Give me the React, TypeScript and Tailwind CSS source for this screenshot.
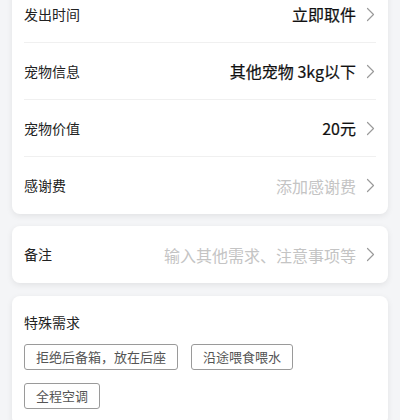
interface RowProps {
  label: string;
  value: string;
  placeholder?: boolean;
  divider?: boolean;
}

function Chevron() {
  return (
    <svg width="9" height="15" viewBox="0 0 9 15" fill="none" className="ml-[10px] mr-[1px]">
      <path d="M1.5 1.5L7.5 7.5L1.5 13.5" stroke="#9a9a9a" strokeWidth="1.2" strokeLinecap="round" strokeLinejoin="round" />
    </svg>
  );
}

function Row({ label, value, placeholder = false, divider = false }: RowProps) {
  return (
    <div className="px-3">
      <div className={`flex h-[57px] items-center justify-between ${divider ? 'border-b border-[#f0f0f0]' : ''}`}>
        <span className="text-[14px] text-[#222]">{label}</span>
        <div className="flex items-center">
          <span
            className={
              placeholder
                ? 'text-[16px] text-[#c4c4c4]'
                : 'text-[16px] text-[#111] [-webkit-text-stroke:0.2px_#111]'
            }
          >
            {value}
          </span>
          <Chevron />
        </div>
      </div>
    </div>
  );
}

const tags = ['拒绝后备箱，放在后座', '沿途喂食喂水', '全程空调'];

export default function App() {
  return (
    <div
      className="h-[420px] w-[400px] overflow-hidden bg-[#f4f5f7] px-3"
      style={{ fontFamily: '"Noto Sans CJK SC", "Noto Sans", sans-serif' }}
    >
      {/* Order details */}
      <div className="-mt-[14px] rounded-b-lg bg-white shadow-[0_2px_6px_rgba(0,0,0,0.08)]">
        <Row label="发出时间" value="立即取件" divider />
        <Row label="宠物信息" value="其他宠物 3kg以下" divider />
        <Row label="宠物价值" value="20元" divider />
        <Row label="感谢费" value="添加感谢费" placeholder />
      </div>

      {/* Remarks */}
      <div className="mt-3 rounded-lg bg-white shadow-[0_2px_6px_rgba(0,0,0,0.08)]">
        <Row label="备注" value="输入其他需求、注意事项等" placeholder />
      </div>

      {/* Special requests */}
      <div className="mt-[13px] rounded-lg bg-white px-3 pb-4 pt-4 shadow-[0_2px_6px_rgba(0,0,0,0.08)]">
        <div className="text-[14px] leading-5 text-[#222]">特殊需求</div>
        <div className="mt-3 flex flex-wrap gap-x-[13px] gap-y-[13px]">
          {tags.map((tag) => (
            <div
              key={tag}
              className="flex h-[26px] items-center rounded-[3px] border border-[#9a9a9a] px-[11px] text-[13px] text-[#555]"
            >
              {tag}
            </div>
          ))}
        </div>
      </div>
    </div>
  );
}
